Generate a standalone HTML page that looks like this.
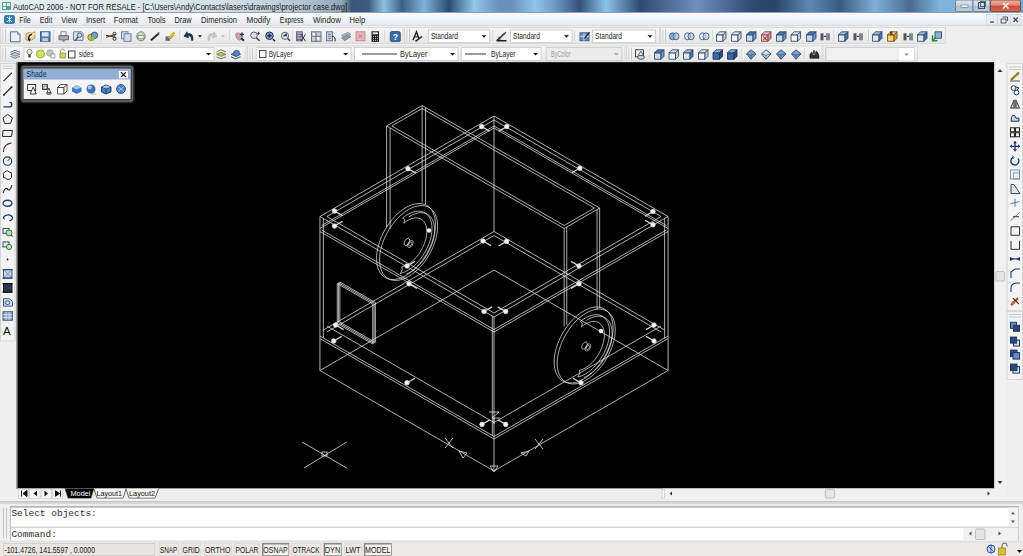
<!DOCTYPE html><html><head><meta charset="utf-8"><title>AutoCAD 2006</title><style>html,body{margin:0;padding:0;overflow:hidden;background:#f0f0f0}svg{display:block}</style></head><body>
<svg width="1023" height="556" viewBox="0 0 1023 556">
<defs>
<linearGradient id="tg" gradientUnits="userSpaceOnUse" x1="0" x2="1023" y1="0" y2="0"><stop offset="0.0000" stop-color="#e4eff2"/><stop offset="0.1466" stop-color="#dce8ee"/><stop offset="0.2248" stop-color="#d2dee6"/><stop offset="0.2933" stop-color="#b6c6d2"/><stop offset="0.3343" stop-color="#90a6b8"/><stop offset="0.3441" stop-color="#3c5474"/><stop offset="0.3597" stop-color="#3e5a7e"/><stop offset="0.3754" stop-color="#8ec0e2"/><stop offset="0.3930" stop-color="#3e5e86"/><stop offset="0.4145" stop-color="#80b2da"/><stop offset="0.4389" stop-color="#2c4c72"/><stop offset="0.4633" stop-color="#92c8ea"/><stop offset="0.4868" stop-color="#6a92bc"/><stop offset="0.5005" stop-color="#6a90c0"/><stop offset="0.5230" stop-color="#8ec6ea"/><stop offset="0.5425" stop-color="#6f98c8"/><stop offset="0.5670" stop-color="#34507a"/><stop offset="0.5924" stop-color="#8cc4ea"/><stop offset="0.6256" stop-color="#2f4a70"/><stop offset="0.6813" stop-color="#6f8fc0"/><stop offset="0.7351" stop-color="#2e4a72"/><stop offset="0.7576" stop-color="#2a4468"/><stop offset="0.7918" stop-color="#5f88b4"/><stop offset="0.8211" stop-color="#3a5a80"/><stop offset="0.8553" stop-color="#7fb0d8"/><stop offset="0.8895" stop-color="#4a6a90"/><stop offset="0.9189" stop-color="#80b4dc"/><stop offset="1.0000" stop-color="#78a8d0"/></linearGradient>
<linearGradient id="mg" x1="0" x2="0" y1="0" y2="1"><stop offset="0" stop-color="#fbfcfd"/><stop offset="1" stop-color="#e4e8ef"/></linearGradient>
<linearGradient id="tbg" x1="0" x2="0" y1="0" y2="1"><stop offset="0" stop-color="#f6f6f6"/><stop offset="1" stop-color="#e6e6e6"/></linearGradient>
<linearGradient id="closeg" x1="0" x2="0" y1="0" y2="1"><stop offset="0" stop-color="#eeb0a2"/><stop offset="0.45" stop-color="#e08a78"/><stop offset="0.52" stop-color="#c84a34"/><stop offset="1" stop-color="#d86a50"/></linearGradient>
<linearGradient id="btng" x1="0" x2="0" y1="0" y2="1"><stop offset="0" stop-color="#dde6ee"/><stop offset="0.5" stop-color="#c5d3df"/><stop offset="0.52" stop-color="#a9bccd"/><stop offset="1" stop-color="#c0d0dc"/></linearGradient>
</defs>
<rect x="0" y="0" width="1023" height="556" fill="#efefef" />
<rect x="0" y="0" width="1023" height="13" fill="url(#tg)" />
<line x1="0" y1="12.5" x2="1023" y2="12.5" stroke="#8ea2b4" stroke-width="1" />
<g fill="#2a8c7a"><rect x="2" y="2" width="9" height="8" fill="#4fa597"/><rect x="3" y="3" width="3" height="3" fill="#e8f4f0"/><rect x="7" y="3" width="3" height="3" fill="#e8f4f0"/><rect x="3" y="7" width="3" height="2" fill="#e8f4f0"/></g>
<text x="13" y="9.8" font-family='"Liberation Sans", sans-serif' font-size="8.6" fill="#1a1a1a" textLength="334" lengthAdjust="spacingAndGlyphs" >AutoCAD 2006 - NOT FOR RESALE - [C:\Users\Andy\Contacts\lasers\drawings\projector case.dwg]</text>
<rect x="955.5" y="0" width="17.5" height="11.5" fill="url(#btng)" stroke="#5f7387" stroke-width="0.8" rx="1.5"/>
<rect x="973" y="0" width="17" height="11.5" fill="url(#btng)" stroke="#5f7387" stroke-width="0.8" rx="1.5"/>
<rect x="990.5" y="0" width="30" height="11.5" fill="url(#closeg)" stroke="#6f3a30" stroke-width="0.8" rx="1.5"/>
<rect x="961" y="5" width="7" height="2.2" fill="#f4f8fb" stroke="#4d5e70" stroke-width="0.5" />
<rect x="978.5" y="2.5" width="6" height="6" fill="none" stroke="#3d4d5d" stroke-width="1" />
<rect x="980.5" y="1.5" width="5" height="5" fill="none" stroke="#3d4d5d" stroke-width="0.8" />
<path d="M1003,3 L1008.5,8.5 M1008.5,3 L1003,8.5" stroke="#fbeee8" stroke-width="1.7"/>
<rect x="0" y="13" width="1023" height="13" fill="url(#mg)" />
<line x1="0" y1="25.5" x2="1023" y2="25.5" stroke="#d8dde4" stroke-width="1" />
<rect x="4" y="15" width="11" height="9" fill="#3a7bb0" rx="2"/>
<path d="M7,17 L12,22 M12,17 L7,22 M9.5,16.5 V22.5" stroke="#dbe9f5" stroke-width="0.9"/>
<text x="19.2" y="23" font-family='"Liberation Sans", sans-serif' font-size="8.6" fill="#222" textLength="11.5" lengthAdjust="spacingAndGlyphs" >File</text>
<text x="39.7" y="23" font-family='"Liberation Sans", sans-serif' font-size="8.6" fill="#222" textLength="12.5" lengthAdjust="spacingAndGlyphs" >Edit</text>
<text x="61.2" y="23" font-family='"Liberation Sans", sans-serif' font-size="8.6" fill="#222" textLength="16.0" lengthAdjust="spacingAndGlyphs" >View</text>
<text x="86" y="23" font-family='"Liberation Sans", sans-serif' font-size="8.6" fill="#222" textLength="19" lengthAdjust="spacingAndGlyphs" >Insert</text>
<text x="113.8" y="23" font-family='"Liberation Sans", sans-serif' font-size="8.6" fill="#222" textLength="24.2" lengthAdjust="spacingAndGlyphs" >Format</text>
<text x="147.6" y="23" font-family='"Liberation Sans", sans-serif' font-size="8.6" fill="#222" textLength="18.0" lengthAdjust="spacingAndGlyphs" >Tools</text>
<text x="174.6" y="23" font-family='"Liberation Sans", sans-serif' font-size="8.6" fill="#222" textLength="17.0" lengthAdjust="spacingAndGlyphs" >Draw</text>
<text x="201" y="23" font-family='"Liberation Sans", sans-serif' font-size="8.6" fill="#222" textLength="36.1" lengthAdjust="spacingAndGlyphs" >Dimension</text>
<text x="246.5" y="23" font-family='"Liberation Sans", sans-serif' font-size="8.6" fill="#222" textLength="23.9" lengthAdjust="spacingAndGlyphs" >Modify</text>
<text x="279.8" y="23" font-family='"Liberation Sans", sans-serif' font-size="8.6" fill="#222" textLength="23.8" lengthAdjust="spacingAndGlyphs" >Express</text>
<text x="313" y="23" font-family='"Liberation Sans", sans-serif' font-size="8.6" fill="#222" textLength="27.8" lengthAdjust="spacingAndGlyphs" >Window</text>
<text x="349.6" y="23" font-family='"Liberation Sans", sans-serif' font-size="8.6" fill="#222" textLength="15.6" lengthAdjust="spacingAndGlyphs" >Help</text>
<rect x="986.6" y="14.6" width="10.600000000000023" height="10.4" fill="#e9edf2" stroke="#c4ccd6" stroke-width="0.6" />
<rect x="997.8" y="14.6" width="11.200000000000045" height="10.4" fill="#e9edf2" stroke="#c4ccd6" stroke-width="0.6" />
<rect x="1010.5" y="14.6" width="10.5" height="10.4" fill="#e9edf2" stroke="#c4ccd6" stroke-width="0.6" />
<line x1="990" y1="22" x2="994" y2="22" stroke="#444" stroke-width="1.2" />
<path d="M1001,19 h5 v4 h-5 z M1002.5,17 h5 v4" fill="none" stroke="#444" stroke-width="0.9"/>
<path d="M1013.5,17.5 L1018,22 M1018,17.5 L1013.5,22" stroke="#444" stroke-width="1.2"/>
<rect x="0.5" y="27.5" width="402.5" height="16" fill="url(#tbg)" stroke="#d9d9d9" stroke-width="1" />
<line x1="3" y1="29" x2="3" y2="42" stroke="#c8c8c8" stroke-width="1" />
<line x1="5.5" y1="29" x2="5.5" y2="42" stroke="#c8c8c8" stroke-width="1" />
<line x1="4" y1="29" x2="4" y2="42" stroke="#ffffff" stroke-width="0.6" />
<rect x="404.5" y="27.5" width="255" height="16" fill="url(#tbg)" stroke="#d9d9d9" stroke-width="1" />
<line x1="407" y1="29" x2="407" y2="42" stroke="#c8c8c8" stroke-width="1" />
<line x1="409.5" y1="29" x2="409.5" y2="42" stroke="#c8c8c8" stroke-width="1" />
<line x1="408" y1="29" x2="408" y2="42" stroke="#ffffff" stroke-width="0.6" />
<rect x="660.5" y="27.5" width="285" height="16" fill="url(#tbg)" stroke="#d9d9d9" stroke-width="1" />
<line x1="663" y1="29" x2="663" y2="42" stroke="#c8c8c8" stroke-width="1" />
<line x1="665.5" y1="29" x2="665.5" y2="42" stroke="#c8c8c8" stroke-width="1" />
<line x1="664" y1="29" x2="664" y2="42" stroke="#ffffff" stroke-width="0.6" />
<rect x="0.5" y="46.0" width="245.5" height="15.299999999999997" fill="url(#tbg)" stroke="#d9d9d9" stroke-width="1" />
<line x1="3" y1="47.5" x2="3" y2="59.8" stroke="#c8c8c8" stroke-width="1" />
<line x1="5.5" y1="47.5" x2="5.5" y2="59.8" stroke="#c8c8c8" stroke-width="1" />
<line x1="4" y1="47.5" x2="4" y2="59.8" stroke="#ffffff" stroke-width="0.6" />
<rect x="247.5" y="46.0" width="377.5" height="15.299999999999997" fill="url(#tbg)" stroke="#d9d9d9" stroke-width="1" />
<line x1="250" y1="47.5" x2="250" y2="59.8" stroke="#c8c8c8" stroke-width="1" />
<line x1="252.5" y1="47.5" x2="252.5" y2="59.8" stroke="#c8c8c8" stroke-width="1" />
<line x1="251" y1="47.5" x2="251" y2="59.8" stroke="#ffffff" stroke-width="0.6" />
<rect x="626.5" y="46.0" width="195.5" height="15.299999999999997" fill="url(#tbg)" stroke="#d9d9d9" stroke-width="1" />
<line x1="629" y1="47.5" x2="629" y2="59.8" stroke="#c8c8c8" stroke-width="1" />
<line x1="631.5" y1="47.5" x2="631.5" y2="59.8" stroke="#c8c8c8" stroke-width="1" />
<line x1="630" y1="47.5" x2="630" y2="59.8" stroke="#ffffff" stroke-width="0.6" />
<rect x="823.0" y="46.0" width="94.5" height="15.299999999999997" fill="url(#tbg)" stroke="#d9d9d9" stroke-width="1" />
<line x1="825.5" y1="47.5" x2="825.5" y2="59.8" stroke="#c8c8c8" stroke-width="1" />
<line x1="828.0" y1="47.5" x2="828.0" y2="59.8" stroke="#c8c8c8" stroke-width="1" />
<line x1="826.5" y1="47.5" x2="826.5" y2="59.8" stroke="#ffffff" stroke-width="0.6" />
<line x1="54" y1="30" x2="54" y2="41" stroke="#c9c9c9" stroke-width="1" />
<line x1="55" y1="30" x2="55" y2="41" stroke="#fbfbfb" stroke-width="1" />
<line x1="101.6" y1="30" x2="101.6" y2="41" stroke="#c9c9c9" stroke-width="1" />
<line x1="102.6" y1="30" x2="102.6" y2="41" stroke="#fbfbfb" stroke-width="1" />
<line x1="180" y1="30" x2="180" y2="41" stroke="#c9c9c9" stroke-width="1" />
<line x1="181" y1="30" x2="181" y2="41" stroke="#fbfbfb" stroke-width="1" />
<line x1="230" y1="30" x2="230" y2="41" stroke="#c9c9c9" stroke-width="1" />
<line x1="231" y1="30" x2="231" y2="41" stroke="#fbfbfb" stroke-width="1" />
<line x1="293" y1="30" x2="293" y2="41" stroke="#c9c9c9" stroke-width="1" />
<line x1="294" y1="30" x2="294" y2="41" stroke="#fbfbfb" stroke-width="1" />
<line x1="385" y1="30" x2="385" y2="41" stroke="#c9c9c9" stroke-width="1" />
<line x1="386" y1="30" x2="386" y2="41" stroke="#fbfbfb" stroke-width="1" />
<line x1="493" y1="30" x2="493" y2="41" stroke="#c9c9c9" stroke-width="1" />
<line x1="494" y1="30" x2="494" y2="41" stroke="#fbfbfb" stroke-width="1" />
<line x1="575" y1="30" x2="575" y2="41" stroke="#c9c9c9" stroke-width="1" />
<line x1="576" y1="30" x2="576" y2="41" stroke="#fbfbfb" stroke-width="1" />
<line x1="713" y1="30" x2="713" y2="41" stroke="#c9c9c9" stroke-width="1" />
<line x1="714" y1="30" x2="714" y2="41" stroke="#fbfbfb" stroke-width="1" />
<line x1="834" y1="30" x2="834" y2="41" stroke="#c9c9c9" stroke-width="1" />
<line x1="835" y1="30" x2="835" y2="41" stroke="#fbfbfb" stroke-width="1" />
<line x1="868.5" y1="30" x2="868.5" y2="41" stroke="#c9c9c9" stroke-width="1" />
<line x1="869.5" y1="30" x2="869.5" y2="41" stroke="#fbfbfb" stroke-width="1" />
<line x1="649.8" y1="48.5" x2="649.8" y2="58.8" stroke="#c9c9c9" stroke-width="1" />
<line x1="650.8" y1="48.5" x2="650.8" y2="58.8" stroke="#fbfbfb" stroke-width="1" />
<line x1="742" y1="48.5" x2="742" y2="58.8" stroke="#c9c9c9" stroke-width="1" />
<line x1="743" y1="48.5" x2="743" y2="58.8" stroke="#fbfbfb" stroke-width="1" />
<line x1="804.8" y1="48.5" x2="804.8" y2="58.8" stroke="#c9c9c9" stroke-width="1" />
<line x1="805.8" y1="48.5" x2="805.8" y2="58.8" stroke="#fbfbfb" stroke-width="1" />
<rect x="428.5" y="29.9" width="61" height="12.700000000000003" fill="#fff" stroke="#d0d0d0" stroke-width="1" />
<path d="M481.5,35.25 h5 l-2.5,2.6 z" fill="#111"/>
<text x="430.9" y="38.7" font-family='"Liberation Sans", sans-serif' font-size="8.2" fill="#222" textLength="27" lengthAdjust="spacingAndGlyphs" >Standard</text>
<rect x="510.5" y="29.9" width="61.5" height="12.700000000000003" fill="#fff" stroke="#d0d0d0" stroke-width="1" />
<path d="M564.0,35.25 h5 l-2.5,2.6 z" fill="#111"/>
<text x="513" y="38.7" font-family='"Liberation Sans", sans-serif' font-size="8.2" fill="#222" textLength="27" lengthAdjust="spacingAndGlyphs" >Standard</text>
<rect x="592.5" y="29.9" width="63" height="12.700000000000003" fill="#fff" stroke="#d0d0d0" stroke-width="1" />
<path d="M647.5,35.25 h5 l-2.5,2.6 z" fill="#111"/>
<text x="595" y="38.7" font-family='"Liberation Sans", sans-serif' font-size="8.2" fill="#222" textLength="27" lengthAdjust="spacingAndGlyphs" >Standard</text>
<rect x="24.0" y="47.5" width="190.0" height="13" fill="#fff" stroke="#d0d0d0" stroke-width="1" />
<path d="M206.0,53.0 h5 l-2.5,2.6 z" fill="#111"/>
<text x="78.8" y="56.6" font-family='"Liberation Sans", sans-serif' font-size="8.2" fill="#222" textLength="14.6" lengthAdjust="spacingAndGlyphs" >sides</text>
<rect x="256.2" y="47.5" width="94.90000000000003" height="13" fill="#fff" stroke="#d0d0d0" stroke-width="1" />
<path d="M343.1,53.0 h5 l-2.5,2.6 z" fill="#111"/>
<text x="268.7" y="56.6" font-family='"Liberation Sans", sans-serif' font-size="8.2" fill="#222" textLength="24" lengthAdjust="spacingAndGlyphs" >ByLayer</text>
<rect x="259.5" y="50.5" width="6.5" height="7" fill="#fff" stroke="#333" stroke-width="0.9" />
<rect x="354.5" y="47.5" width="103.5" height="13" fill="#fff" stroke="#d0d0d0" stroke-width="1" />
<path d="M450.0,53.0 h5 l-2.5,2.6 z" fill="#111"/>
<text x="400" y="56.6" font-family='"Liberation Sans", sans-serif' font-size="8.2" fill="#222" textLength="27.5" lengthAdjust="spacingAndGlyphs" >ByLayer</text>
<line x1="362" y1="54" x2="397" y2="54" stroke="#222" stroke-width="0.9" />
<rect x="461.3" y="47.5" width="79.80000000000001" height="13" fill="#fff" stroke="#d0d0d0" stroke-width="1" />
<path d="M533.1,53.0 h5 l-2.5,2.6 z" fill="#111"/>
<text x="491" y="56.6" font-family='"Liberation Sans", sans-serif' font-size="8.2" fill="#222" textLength="24.5" lengthAdjust="spacingAndGlyphs" >ByLayer</text>
<line x1="465" y1="54" x2="486" y2="54" stroke="#222" stroke-width="0.9" />
<rect x="546.2" y="47.5" width="75.59999999999991" height="13" fill="#ececec" stroke="#d0d0d0" stroke-width="1" />
<path d="M613.8,53.0 h5 l-2.5,2.6 z" fill="#aaa"/>
<text x="551" y="56.6" font-family='"Liberation Sans", sans-serif' font-size="8.2" fill="#9a9a9a" textLength="19.5" lengthAdjust="spacingAndGlyphs" >ByColor</text>
<rect x="825.9" y="47.5" width="88.20000000000005" height="13" fill="#f0f0f0" stroke="#d0d0d0" stroke-width="1" />
<path d="M906.1,53.0 h5 l-2.5,2.6 z" fill="#999"/>
<rect x="899" y="48" width="15" height="12.5" fill="#fff" />
<path d="M904,53.5 h5 l-2.5,2.6 z" fill="#999"/>
<rect x="0" y="62" width="17.5" height="440" fill="#efefef" />
<rect x="0.5" y="63.5" width="14.5" height="277.5" fill="#f3f3f3" stroke="#d6d6d6" stroke-width="1" />
<line x1="3" y1="66" x2="13" y2="66" stroke="#c8c8c8" stroke-width="1" />
<line x1="3" y1="68.5" x2="13" y2="68.5" stroke="#c8c8c8" stroke-width="1" />
<line x1="16.8" y1="62" x2="16.8" y2="489" stroke="#5a5a5a" stroke-width="0.8" />
<rect x="1005.5" y="62" width="17.5" height="440" fill="#efefef" />
<rect x="1007" y="63.5" width="15.5" height="247" fill="#f3f3f3" stroke="#d6d6d6" stroke-width="1" />
<line x1="1009" y1="67" x2="1021" y2="67" stroke="#c8c8c8" stroke-width="1" />
<line x1="1009" y1="69.5" x2="1021" y2="69.5" stroke="#c8c8c8" stroke-width="1" />
<rect x="1007" y="311.5" width="15.5" height="68" fill="#f3f3f3" stroke="#d6d6d6" stroke-width="1" />
<line x1="1009" y1="314.5" x2="1021" y2="314.5" stroke="#c8c8c8" stroke-width="1" />
<line x1="1009" y1="317" x2="1021" y2="317" stroke="#c8c8c8" stroke-width="1" />
<rect x="17.5" y="62.2" width="977" height="426.4" fill="#000" />
<rect x="994.5" y="62.2" width="11" height="426.4" fill="#f1f1f1" />
<line x1="994.8" y1="62.2" x2="994.8" y2="488.6" stroke="#e2e2e2" stroke-width="1" />
<path d="M997.5,72 h5 l-2.5,-3 z" fill="#333"/>
<path d="M997.5,481 h5 l-2.5,3 z" fill="#333"/>
<rect x="995.8" y="271.6" width="8.6" height="9.5" fill="#e6e6e6" stroke="#b4b4b4" stroke-width="0.8" rx="1"/>
<rect x="17.5" y="488.6" width="977" height="10.2" fill="#ededed" />
<rect x="994.5" y="488.6" width="11" height="10.2" fill="#f1f1f1" />
<rect x="18.5" y="489" width="10" height="9.3" fill="#f4f4f4" stroke="#c9c9c9" stroke-width="0.7" />
<rect x="29.5" y="489" width="10.5" height="9.3" fill="#f4f4f4" stroke="#c9c9c9" stroke-width="0.7" />
<rect x="41.0" y="489" width="10.5" height="9.3" fill="#f4f4f4" stroke="#c9c9c9" stroke-width="0.7" />
<rect x="52.5" y="489" width="10" height="9.3" fill="#f4f4f4" stroke="#c9c9c9" stroke-width="0.7" />
<path d="M21.5,490.5 v6 M27,490.5 l-4,3 l4,3 z" stroke="#111" stroke-width="1" fill="#111"/>
<path d="M37,490.8 l-3.5,2.7 l3.5,2.7 z" fill="#111"/>
<path d="M44.5,490.8 l3.5,2.7 l-3.5,2.7 z" fill="#111"/>
<path d="M55.5,490.8 l4,2.7 l-4,2.7 z M60.5,490.5 v6" stroke="#111" stroke-width="1" fill="#111"/>
<path d="M65,488.6 L68,498.2 L91,498.2 L94,488.6 z" fill="#000" stroke="#555" stroke-width="0.6"/>
<text x="70.5" y="496.3" font-family='"Liberation Sans", sans-serif' font-size="8" fill="#fff" textLength="20" lengthAdjust="spacingAndGlyphs" >Model</text>
<path d="M94,488.8 L97,498.2 L123,498.2 L126,488.8" fill="#f6f6f6" stroke="#333" stroke-width="0.7"/>
<text x="96.5" y="496.3" font-family='"Liberation Sans", sans-serif' font-size="8" fill="#111" textLength="25.5" lengthAdjust="spacingAndGlyphs" >Layout1</text>
<path d="M126,488.8 L129,498.2 L155,498.2 L158.5,488.8" fill="#f6f6f6" stroke="#333" stroke-width="0.7"/>
<text x="129" y="496.3" font-family='"Liberation Sans", sans-serif' font-size="8" fill="#111" textLength="26" lengthAdjust="spacingAndGlyphs" >Layout2</text>
<rect x="662.5" y="488.6" width="332" height="10.2" fill="#f1f1f1" />
<rect x="662" y="489.5" width="2.5" height="8.5" fill="#fafafa" stroke="#bdbdbd" stroke-width="0.6" />
<path d="M672,491.5 v4 l-2.5,-2 z" fill="#333"/>
<path d="M987.5,491.5 v4 l2.5,-2 z" fill="#333"/>
<rect x="825.3" y="489.4" width="9.4" height="8.6" fill="#e6e6e6" stroke="#b4b4b4" stroke-width="0.8" rx="1"/>
<rect x="0" y="498.8" width="1023" height="44" fill="#efefef" />
<line x1="0" y1="501.8" x2="1023" y2="501.8" stroke="#b8b8b8" stroke-width="1.2" />
<line x1="0" y1="503.6" x2="1023" y2="503.6" stroke="#cfcfcf" stroke-width="0.8" />
<line x1="3.5" y1="508" x2="3.5" y2="538" stroke="#c9c9c9" stroke-width="1" />
<line x1="6.5" y1="508" x2="6.5" y2="538" stroke="#c9c9c9" stroke-width="1" />
<rect x="10" y="506.5" width="1008.5" height="34.5" fill="#fff" />
<line x1="10" y1="506.9" x2="1018.5" y2="506.9" stroke="#9c9c9c" stroke-width="1.3" />
<line x1="10.4" y1="506.5" x2="10.4" y2="541" stroke="#a8a8a8" stroke-width="0.8" />
<line x1="10" y1="527.2" x2="1018.5" y2="527.2" stroke="#b9b9b9" stroke-width="0.9" />
<line x1="10" y1="541" x2="1018.5" y2="541" stroke="#cfcfcf" stroke-width="0.8" />
<text x="11.4" y="516.3" font-family='"Liberation Mono", monospace' font-size="9.6" fill="#2a2a2a" textLength="85.4" lengthAdjust="spacingAndGlyphs" >Select objects:</text>
<text x="11.4" y="537.2" font-family='"Liberation Mono", monospace' font-size="9.6" fill="#2a2a2a" textLength="45.5" lengthAdjust="spacingAndGlyphs" >Command:</text>
<rect x="1008.3" y="507.5" width="10" height="19.5" fill="#f4f4f4" />
<path d="M1011,514.3 h4 l-2,-2.5 z" fill="#555"/>
<path d="M1011,520.5 h4 l-2,2.5 z" fill="#555"/>
<rect x="963.4" y="527.8" width="43.4" height="12.8" fill="#f1f1f1" />
<path d="M971.5,531.5 v4 l-2.5,-2 z" fill="#444"/>
<path d="M998.5,531.5 v4 l2.5,-2 z" fill="#444"/>
<rect x="975.5" y="529" width="9.5" height="10.5" fill="#e4e4e4" stroke="#b4b4b4" stroke-width="0.8" rx="1"/>
<rect x="1006.8" y="527.8" width="11.6" height="12.8" fill="#f1f1f1" />
<line x1="1018.5" y1="506.5" x2="1018.5" y2="541" stroke="#c8c8c8" stroke-width="0.8" />
<rect x="0" y="541.5" width="1023" height="14.5" fill="#ece9e6" />
<line x1="0" y1="541.8" x2="1023" y2="541.8" stroke="#dcdcdc" stroke-width="0.8" />
<rect x="3.5" y="543.5" width="151.3" height="12" fill="#e9e6e3" stroke="#cfcbc7" stroke-width="0.8" />
<text x="4.4" y="553" font-family='"Liberation Sans", sans-serif' font-size="8.2" fill="#222" textLength="90.6" lengthAdjust="spacingAndGlyphs" >-101.4726, 141.5597 , 0.0000</text>
<rect x="159.1" y="543.5" width="19.200000000000017" height="12" fill="#eae7e4" stroke="#d6d3d0" stroke-width="0.6" />
<text x="159.9" y="553.2" font-family='"Liberation Sans", sans-serif' font-size="8.4" fill="#222" textLength="17.4" lengthAdjust="spacingAndGlyphs" >SNAP</text>
<rect x="181.8" y="543.5" width="19.0" height="12" fill="#eae7e4" stroke="#d6d3d0" stroke-width="0.6" />
<text x="182.60000000000002" y="553.2" font-family='"Liberation Sans", sans-serif' font-size="8.4" fill="#222" textLength="17.2" lengthAdjust="spacingAndGlyphs" >GRID</text>
<rect x="204.3" y="543.5" width="27.099999999999994" height="12" fill="#eae7e4" stroke="#d6d3d0" stroke-width="0.6" />
<text x="205.10000000000002" y="553.2" font-family='"Liberation Sans", sans-serif' font-size="8.4" fill="#222" textLength="25.3" lengthAdjust="spacingAndGlyphs" >ORTHO</text>
<rect x="234.8" y="543.5" width="24.69999999999999" height="12" fill="#eae7e4" stroke="#d6d3d0" stroke-width="0.6" />
<text x="235.60000000000002" y="553.2" font-family='"Liberation Sans", sans-serif' font-size="8.4" fill="#222" textLength="22.9" lengthAdjust="spacingAndGlyphs" >POLAR</text>
<rect x="262.5" y="543.5" width="26.30000000000001" height="12" fill="#f4f2f0" stroke="#8a8a8a" stroke-width="0.8" />
<line x1="263" y1="544" x2="288.3" y2="544" stroke="#6a6a6a" stroke-width="0.8" />
<line x1="263" y1="544" x2="263" y2="555.5" stroke="#6a6a6a" stroke-width="0.8" />
<text x="263.3" y="553.2" font-family='"Liberation Sans", sans-serif' font-size="8.4" fill="#222" textLength="24.5" lengthAdjust="spacingAndGlyphs" >OSNAP</text>
<rect x="291.7" y="543.5" width="28.80000000000001" height="12" fill="#eae7e4" stroke="#d6d3d0" stroke-width="0.6" />
<text x="292.5" y="553.2" font-family='"Liberation Sans", sans-serif' font-size="8.4" fill="#222" textLength="27.0" lengthAdjust="spacingAndGlyphs" >OTRACK</text>
<rect x="324.0" y="543.5" width="17.30000000000001" height="12" fill="#f4f2f0" stroke="#8a8a8a" stroke-width="0.8" />
<line x1="324.5" y1="544" x2="340.8" y2="544" stroke="#6a6a6a" stroke-width="0.8" />
<line x1="324.5" y1="544" x2="324.5" y2="555.5" stroke="#6a6a6a" stroke-width="0.8" />
<text x="324.8" y="553.2" font-family='"Liberation Sans", sans-serif' font-size="8.4" fill="#222" textLength="15.5" lengthAdjust="spacingAndGlyphs" >DYN</text>
<rect x="344.8" y="543.5" width="16.80000000000001" height="12" fill="#eae7e4" stroke="#d6d3d0" stroke-width="0.6" />
<text x="345.6" y="553.2" font-family='"Liberation Sans", sans-serif' font-size="8.4" fill="#222" textLength="15.0" lengthAdjust="spacingAndGlyphs" >LWT</text>
<rect x="364.3" y="543.5" width="27.19999999999999" height="12" fill="#f4f2f0" stroke="#8a8a8a" stroke-width="0.8" />
<line x1="364.8" y1="544" x2="391" y2="544" stroke="#6a6a6a" stroke-width="0.8" />
<line x1="364.8" y1="544" x2="364.8" y2="555.5" stroke="#6a6a6a" stroke-width="0.8" />
<text x="365.1" y="553.2" font-family='"Liberation Sans", sans-serif' font-size="8.4" fill="#222" textLength="25.4" lengthAdjust="spacingAndGlyphs" >MODEL</text>
<g><circle cx="991" cy="549" r="4" fill="#c9d5ee" stroke="#3855a6" stroke-width="1"/><path d="M988,546 l6,6 M991,544.5 v9" stroke="#3855a6" stroke-width="0.9"/></g>
<g><rect x="998.5" y="548" width="7" height="7" fill="#d8c22a" stroke="#7a6a10" stroke-width="0.6"/><path d="M1002,548 v-2.5 a2.5,2.5 0 0 1 5,0 v1" fill="none" stroke="#555" stroke-width="1"/></g>
<path d="M1017,550 h5 l-2.5,3 z" fill="#111"/>
<g clip-path="url(#dclip)">
<clipPath id="dclip"><rect x="17.5" y="62.2" width="977" height="426.4"/></clipPath>
<path d="M494.0,116.0L668.07,216.5 M668.07,216.5L494.0,317.0 M494.0,317.0L319.93,216.5 M319.93,216.5L494.0,116.0 M494.0,120.0L661.14,216.5 M661.14,216.5L494.0,313.0 M494.0,313.0L326.86,216.5 M326.86,216.5L494.0,120.0 M319.93,216.5L319.93,370.5 M494.0,317.0L494.0,471.0 M668.07,216.5L668.07,370.5 M323.39,218.5L323.39,338.0 M492.27,316.0L492.27,435.5 M664.61,218.5L664.61,338.0 M494.0,116.0L494.0,231.5 M319.93,336.0L494.0,436.5 M494.0,436.5L668.07,336.0 M319.93,338.5L494.0,439.0 M494.0,439.0L668.07,338.5 M319.93,370.5L494.0,471.0 M494.0,471.0L668.07,370.5 M319.93,370.5L494.0,270.0 M494.0,270.0L668.07,370.5 M323.39,330.0L494.0,231.5 M494.0,231.5L664.61,330.0 M326.86,332.0L494.0,235.5 M494.0,235.5L661.14,332.0 M319.93,228.5L494.0,128.0 M494.0,128.0L668.07,228.5 M319.93,231.5L494.0,332.0 M494.0,332.0L668.07,231.5 M321.66,230.0L494.0,329.5 M494.0,329.5L666.34,230.0 M321.66,225.5L494.0,126.0 M494.0,126.0L666.34,225.5 M326.86,326.0L494.0,422.5 M494.0,422.5L661.14,326.0 M422.12,105.5L599.66,208.0 M599.66,208.0L564.15,228.5 M564.15,228.5L386.61,126.0 M386.61,126.0L422.12,105.5 M422.12,108.5L594.46,208.0 M594.46,208.0L564.15,225.5 M564.15,225.5L391.81,126.0 M391.81,126.0L422.12,108.5 M386.61,126.0L386.61,227.0 M390.08,128.0L390.08,229.0 M422.12,105.5L422.12,202.5 M425.58,107.5L425.58,204.5 M564.15,228.5L564.15,326.5 M566.75,227.0L566.75,325.0 M599.66,208.0L599.66,308.0 M597.06,209.5L597.06,309.5 M337.25,283.5L372.76,304.0 M372.76,304.0L372.76,344.0 M372.76,344.0L337.25,323.5 M337.25,323.5L337.25,283.5 M338.55,282.75L374.06,303.25 M374.06,303.25L374.06,343.25 M374.06,343.25L338.55,322.75 M338.55,322.75L338.55,282.75 M339.85,282.0L375.35,302.5 M375.35,302.5L375.35,342.5 M375.35,342.5L339.85,322.0 M339.85,322.0L339.85,282.0" stroke="#e8e8e8" stroke-width="0.75" fill="none"/>
<path d="M435.44,224.50 L435.30,221.25 L434.88,218.19 L434.18,215.36 L433.20,212.78 L431.97,210.48 L430.48,208.48 L428.76,206.79 L426.82,205.44 L424.68,204.43 L422.36,203.79 L419.88,203.50 L417.27,203.58 L414.55,204.03 L411.74,204.84 L408.89,206.00 L406.00,207.50 L403.11,209.33 L400.26,211.47 L397.45,213.90 L394.73,216.59 L392.12,219.53 L389.64,222.67 L387.32,226.00 L385.18,229.48 L383.24,233.07 L381.52,236.75 L380.03,240.47 L378.80,244.19 L377.82,247.90 L377.12,251.54 L376.70,255.09 L376.56,258.50 L376.70,261.75 L377.12,264.81 L377.82,267.64 L378.80,270.22 L380.03,272.52 L381.52,274.52 L383.24,276.21 L385.18,277.56 L387.32,278.57 L389.64,279.21 L392.12,279.50 L394.73,279.42 L397.45,278.97 L400.26,278.16 L403.11,277.00 L406.00,275.50 L408.89,273.67 L411.74,271.53 L414.55,269.10 L417.27,266.41 L419.88,263.47 L422.36,260.33 L424.68,257.00 L426.82,253.52 L428.76,249.93 L430.48,246.25 L431.97,242.53 L433.20,238.81 L434.18,235.10 L434.88,231.46 L435.30,227.91 L435.44,224.50 M437.61,226.25 L437.47,223.05 L437.05,220.04 L436.36,217.25 L435.40,214.71 L434.18,212.44 L432.72,210.46 L431.02,208.80 L429.11,207.47 L427.00,206.48 L424.72,205.84 L422.27,205.56 L419.70,205.64 L417.02,206.08 L414.26,206.88 L411.44,208.02 L408.60,209.50 L405.75,211.30 L402.94,213.41 L400.18,215.80 L397.50,218.46 L394.92,221.35 L392.48,224.45 L390.19,227.73 L388.08,231.16 L386.17,234.70 L384.48,238.32 L383.01,241.98 L381.80,245.66 L380.84,249.30 L380.14,252.89 L379.73,256.39 L379.59,259.75 L379.73,262.95 L380.14,265.96 L380.84,268.75 L381.80,271.29 L383.01,273.56 L384.48,275.54 L386.17,277.20 L388.08,278.53 L390.19,279.52 L392.48,280.16 L394.92,280.44 L397.50,280.36 L400.18,279.92 L402.94,279.12 L405.75,277.98 L408.60,276.50 L411.44,274.70 L414.26,272.59 L417.02,270.20 L419.70,267.54 L422.27,264.65 L424.72,261.55 L427.00,258.27 L429.11,254.84 L431.02,251.30 L432.72,247.68 L434.18,244.02 L435.40,240.34 L436.36,236.70 L437.05,233.11 L437.47,229.61 L437.61,226.25 M400.24,273.46 L402.02,273.01 L403.83,272.39 L405.67,271.59 L407.52,270.62 L409.37,269.49 L411.21,268.20 L413.03,266.76 L414.82,265.18 L416.57,263.47 L418.27,261.64 L419.90,259.69 L421.47,257.65 L422.95,255.51 L424.35,253.30 L425.65,251.03 L426.84,248.71 L427.92,246.35 L428.89,243.97 L429.73,241.58 L430.44,239.19 L431.03,236.83 L431.47,234.50 L431.78,232.21 L431.95,229.98 L431.97,227.83 L431.86,225.77 L431.60,223.80 L431.21,221.94 L430.68,220.19 L430.01,218.58 L429.22,217.11 L428.30,215.79 L427.26,214.62 L426.10,213.62 L424.84,212.78 L423.48,212.12 L422.03,211.63 L420.49,211.32 L418.88,211.20 L417.21,211.26 L415.48,211.50 L413.70,211.92 L411.89,212.51 L410.06,213.29 L408.21,214.23 L406.36,215.34 L404.51,216.61 L402.69,218.02 M401.84,266.82 L403.24,266.47 L404.67,265.98 L406.11,265.36 L407.57,264.60 L409.02,263.71 L410.47,262.69 L411.90,261.56 L413.30,260.32 L414.68,258.98 L416.01,257.54 L417.29,256.01 L418.52,254.40 L419.69,252.72 L420.79,250.99 L421.81,249.20 L422.75,247.38 L423.60,245.52 L424.35,243.65 L425.02,241.77 L425.58,239.90 L426.03,238.04 L426.38,236.21 L426.63,234.41 L426.76,232.67 L426.78,230.98 L426.69,229.35 L426.49,227.80 L426.18,226.34 L425.76,224.97 L425.24,223.71 L424.61,222.55 L423.89,221.51 L423.07,220.60 L422.17,219.81 L421.17,219.15 L420.11,218.63 L418.96,218.24 L417.76,218.00 L416.49,217.91 L415.18,217.95 L413.82,218.14 L412.42,218.47 L411.00,218.94 L409.56,219.55 L408.11,220.29 L406.65,221.16 L405.20,222.15 L403.77,223.27 M406.37,273.91 L408.05,273.19 L409.75,272.33 L411.45,271.32 L413.14,270.19 L414.82,268.92 L416.48,267.53 L418.11,266.03 L419.70,264.42 L421.24,262.70 L422.73,260.90 L424.16,259.01 L425.52,257.05 L426.81,255.03 L428.02,252.95 L429.13,250.82 L430.16,248.67 L431.09,246.49 L431.92,244.29 L432.64,242.10 L433.25,239.92 L433.75,237.75 L434.13,235.62 L434.40,233.53 L434.54,231.48 L434.57,229.51 L434.48,227.60 L434.28,225.77 L433.95,224.03 L433.51,222.39 L432.95,220.86 L432.28,219.44 L431.51,218.14 L430.63,216.97 L429.65,215.93 L428.58,215.03 L427.42,214.27 L426.17,213.65 L424.84,213.19 L423.45,212.88 L421.99,212.72 L420.47,212.71 L418.90,212.86 L417.29,213.16 L415.65,213.61 L413.97,214.21 L412.29,214.96 L410.59,215.85 L408.89,216.88 M400.24,273.46 Q403.55,269.44 401.84,266.82 M402.69,218.02 Q405.80,218.72 403.77,223.27 M409.64,240.40 L409.54,239.63 L409.27,239.01 L408.83,238.61 L408.25,238.43 L407.58,238.49 L406.87,238.80 L406.15,239.32 L405.48,240.03 L404.91,240.87 L404.47,241.79 L404.19,242.72 L404.09,243.60 L404.19,244.37 L404.47,244.99 L404.91,245.39 L405.48,245.57 L406.15,245.51 L406.87,245.20 L407.58,244.68 L408.25,243.97 L408.83,243.13 L409.27,242.21 L409.54,241.28 L409.64,240.40 M413.10,242.40 L413.01,241.63 L412.73,241.01 L412.29,240.61 L411.72,240.43 L411.05,240.49 L410.33,240.80 L409.61,241.32 L408.94,242.03 L408.37,242.87 L407.93,243.79 L407.65,244.72 L407.56,245.60 L407.65,246.37 L407.93,246.99 L408.37,247.39 L408.94,247.57 L409.61,247.51 L410.33,247.20 L411.05,246.68 L411.72,245.97 L412.29,245.13 L412.73,244.21 L413.01,243.28 L413.10,242.40 M411.89,243.10 L411.77,242.48 L411.43,242.09 L410.93,241.99 L410.33,242.20 L409.73,242.68 L409.23,243.36 L408.89,244.14 L408.77,244.90 L408.89,245.52 L409.23,245.91 L409.73,246.01 L410.33,245.80 L410.93,245.32 L411.43,244.64 L411.77,243.86 L411.89,243.10" fill="none" stroke="#e6e6e6" stroke-width="0.75"/>
<path d="M613.04,328.00 L612.90,324.75 L612.48,321.69 L611.78,318.86 L610.80,316.28 L609.57,313.98 L608.08,311.98 L606.36,310.29 L604.42,308.94 L602.28,307.93 L599.96,307.29 L597.48,307.00 L594.87,307.08 L592.15,307.53 L589.34,308.34 L586.49,309.50 L583.60,311.00 L580.71,312.83 L577.86,314.97 L575.05,317.40 L572.33,320.09 L569.72,323.03 L567.24,326.17 L564.92,329.50 L562.78,332.98 L560.84,336.57 L559.12,340.25 L557.63,343.97 L556.40,347.69 L555.42,351.40 L554.72,355.04 L554.30,358.59 L554.16,362.00 L554.30,365.25 L554.72,368.31 L555.42,371.14 L556.40,373.72 L557.63,376.02 L559.12,378.02 L560.84,379.71 L562.78,381.06 L564.92,382.07 L567.24,382.71 L569.72,383.00 L572.33,382.92 L575.05,382.47 L577.86,381.66 L580.71,380.50 L583.60,379.00 L586.49,377.17 L589.34,375.03 L592.15,372.60 L594.87,369.91 L597.48,366.97 L599.96,363.83 L602.28,360.50 L604.42,357.02 L606.36,353.43 L608.08,349.75 L609.57,346.03 L610.80,342.31 L611.78,338.60 L612.48,334.96 L612.90,331.41 L613.04,328.00 M615.21,329.75 L615.07,326.55 L614.65,323.54 L613.96,320.75 L613.00,318.21 L611.78,315.94 L610.32,313.96 L608.62,312.30 L606.71,310.97 L604.60,309.98 L602.32,309.34 L599.87,309.06 L597.30,309.14 L594.62,309.58 L591.86,310.38 L589.04,311.52 L586.20,313.00 L583.35,314.80 L580.54,316.91 L577.78,319.30 L575.10,321.96 L572.52,324.85 L570.08,327.95 L567.79,331.23 L565.68,334.66 L563.77,338.20 L562.08,341.82 L560.61,345.48 L559.40,349.16 L558.44,352.80 L557.74,356.39 L557.33,359.89 L557.19,363.25 L557.33,366.45 L557.74,369.46 L558.44,372.25 L559.40,374.79 L560.61,377.06 L562.08,379.04 L563.77,380.70 L565.68,382.03 L567.79,383.02 L570.08,383.66 L572.52,383.94 L575.10,383.86 L577.78,383.42 L580.54,382.62 L583.35,381.48 L586.20,380.00 L589.04,378.20 L591.86,376.09 L594.62,373.70 L597.30,371.04 L599.87,368.15 L602.32,365.05 L604.60,361.77 L606.71,358.34 L608.62,354.80 L610.32,351.18 L611.78,347.52 L613.00,343.84 L613.96,340.20 L614.65,336.61 L615.07,333.11 L615.21,329.75 M577.84,376.96 L579.62,376.51 L581.43,375.89 L583.27,375.09 L585.12,374.12 L586.97,372.99 L588.81,371.70 L590.63,370.26 L592.42,368.68 L594.17,366.97 L595.87,365.14 L597.50,363.19 L599.07,361.15 L600.55,359.01 L601.95,356.80 L603.25,354.53 L604.44,352.21 L605.52,349.85 L606.49,347.47 L607.33,345.08 L608.04,342.69 L608.63,340.33 L609.07,338.00 L609.38,335.71 L609.55,333.48 L609.57,331.33 L609.46,329.27 L609.20,327.30 L608.81,325.44 L608.28,323.69 L607.61,322.08 L606.82,320.61 L605.90,319.29 L604.86,318.12 L603.70,317.12 L602.44,316.28 L601.08,315.62 L599.63,315.13 L598.09,314.82 L596.48,314.70 L594.81,314.76 L593.08,315.00 L591.30,315.42 L589.49,316.01 L587.66,316.79 L585.81,317.73 L583.96,318.84 L582.11,320.11 L580.29,321.52 M579.44,370.32 L580.84,369.97 L582.27,369.48 L583.71,368.86 L585.17,368.10 L586.62,367.21 L588.07,366.19 L589.50,365.06 L590.90,363.82 L592.28,362.48 L593.61,361.04 L594.89,359.51 L596.12,357.90 L597.29,356.22 L598.39,354.49 L599.41,352.70 L600.35,350.88 L601.20,349.02 L601.95,347.15 L602.62,345.27 L603.18,343.40 L603.63,341.54 L603.98,339.71 L604.23,337.91 L604.36,336.17 L604.38,334.48 L604.29,332.85 L604.09,331.30 L603.78,329.84 L603.36,328.47 L602.84,327.21 L602.21,326.05 L601.49,325.01 L600.67,324.10 L599.77,323.31 L598.77,322.65 L597.71,322.13 L596.56,321.74 L595.36,321.50 L594.09,321.41 L592.78,321.45 L591.42,321.64 L590.02,321.97 L588.60,322.44 L587.16,323.05 L585.71,323.79 L584.25,324.66 L582.80,325.65 L581.37,326.77 M583.97,377.41 L585.65,376.69 L587.35,375.83 L589.05,374.82 L590.74,373.69 L592.42,372.42 L594.08,371.03 L595.71,369.53 L597.30,367.92 L598.84,366.20 L600.33,364.40 L601.76,362.51 L603.12,360.55 L604.41,358.53 L605.62,356.45 L606.73,354.32 L607.76,352.17 L608.69,349.99 L609.52,347.79 L610.24,345.60 L610.85,343.42 L611.35,341.25 L611.73,339.12 L612.00,337.03 L612.14,334.98 L612.17,333.01 L612.08,331.10 L611.88,329.27 L611.55,327.53 L611.11,325.89 L610.55,324.36 L609.88,322.94 L609.11,321.64 L608.23,320.47 L607.25,319.43 L606.18,318.53 L605.02,317.77 L603.77,317.15 L602.44,316.69 L601.05,316.38 L599.59,316.22 L598.07,316.21 L596.50,316.36 L594.89,316.66 L593.25,317.11 L591.57,317.71 L589.89,318.46 L588.19,319.35 L586.49,320.38 M577.84,376.96 Q581.15,372.94 579.44,370.32 M580.29,321.52 Q583.40,322.22 581.37,326.77 M587.24,343.90 L587.14,343.13 L586.87,342.51 L586.43,342.11 L585.85,341.93 L585.18,341.99 L584.47,342.30 L583.75,342.82 L583.08,343.53 L582.51,344.37 L582.07,345.29 L581.79,346.22 L581.69,347.10 L581.79,347.87 L582.07,348.49 L582.51,348.89 L583.08,349.07 L583.75,349.01 L584.47,348.70 L585.18,348.18 L585.85,347.47 L586.43,346.63 L586.87,345.71 L587.14,344.78 L587.24,343.90 M590.70,345.90 L590.61,345.13 L590.33,344.51 L589.89,344.11 L589.32,343.93 L588.65,343.99 L587.93,344.30 L587.21,344.82 L586.54,345.53 L585.97,346.37 L585.53,347.29 L585.25,348.22 L585.16,349.10 L585.25,349.87 L585.53,350.49 L585.97,350.89 L586.54,351.07 L587.21,351.01 L587.93,350.70 L588.65,350.18 L589.32,349.47 L589.89,348.63 L590.33,347.71 L590.61,346.78 L590.70,345.90 M589.49,346.60 L589.37,345.98 L589.03,345.59 L588.53,345.49 L587.93,345.70 L587.33,346.18 L586.83,346.86 L586.49,347.64 L586.37,348.40 L586.49,349.02 L586.83,349.41 L587.33,349.51 L587.93,349.30 L588.53,348.82 L589.03,348.14 L589.37,347.36 L589.49,346.60" fill="none" stroke="#e6e6e6" stroke-width="0.75"/>
<g fill="#f4f4f4"><circle cx="429" cy="230.5" r="2.2"/><circle cx="601" cy="331" r="2.2"/></g>
<g fill="#f4f4f4" stroke="#d8d8d8" stroke-width="0.7"><path d="M481.7,126.6 l8,4.6" stroke-width="1.3"/><circle cx="481.7" cy="126.6" r="2.3"/><path d="M506.8,126.6 l-8,4.6" stroke-width="1.3"/><circle cx="506.8" cy="126.6" r="2.3"/><path d="M408,168.7 l8,4.6" stroke-width="1.3"/><circle cx="408" cy="168.7" r="2.3"/><path d="M579.8,168.2 l-8,4.6" stroke-width="1.3"/><circle cx="579.8" cy="168.2" r="2.3"/><path d="M334.5,211 l8,4.6" stroke-width="1.3"/><circle cx="334.5" cy="211" r="2.3"/><path d="M334.5,226 l8,-4.6" stroke-width="1.3"/><circle cx="334.5" cy="226" r="2.3"/><path d="M653,211.5 l-8,4.6" stroke-width="1.3"/><circle cx="653" cy="211.5" r="2.3"/><path d="M653,224.8 l-8,-4.6" stroke-width="1.3"/><circle cx="653" cy="224.8" r="2.3"/><path d="M484,311.5 l8,-4.6" stroke-width="1.3"/><circle cx="484" cy="311.5" r="2.3"/><path d="M505.7,311.5 l-8,-4.6" stroke-width="1.3"/><circle cx="505.7" cy="311.5" r="2.3"/><path d="M483,241 l8,4.6" stroke-width="1.3"/><circle cx="483" cy="241" r="2.3"/><path d="M506.6,241.4 l-8,4.6" stroke-width="1.3"/><circle cx="506.6" cy="241.4" r="2.3"/><path d="M407,266 l8,-4.6" stroke-width="1.3"/><circle cx="407" cy="266" r="2.3"/><path d="M409,283.8 l8,4.6" stroke-width="1.3"/><circle cx="409" cy="283.8" r="2.3"/><path d="M579,266 l-8,-4.6" stroke-width="1.3"/><circle cx="579" cy="266" r="2.3"/><path d="M579,283.8 l-8,4.6" stroke-width="1.3"/><circle cx="579" cy="283.8" r="2.3"/><path d="M335.6,325 l8,4.6" stroke-width="1.3"/><circle cx="335.6" cy="325" r="2.3"/><path d="M333.7,341 l8,-4.6" stroke-width="1.3"/><circle cx="333.7" cy="341" r="2.3"/><path d="M654,325 l-8,4.6" stroke-width="1.3"/><circle cx="654" cy="325" r="2.3"/><path d="M654,341 l-8,-4.6" stroke-width="1.3"/><circle cx="654" cy="341" r="2.3"/><path d="M407,382.8 l8,-4.6" stroke-width="1.3"/><circle cx="407" cy="382.8" r="2.3"/><path d="M581,382.8 l-8,-4.6" stroke-width="1.3"/><circle cx="581" cy="382.8" r="2.3"/><path d="M482,424.4 l8,-4.6" stroke-width="1.3"/><circle cx="482" cy="424.4" r="2.3"/><path d="M505.7,424.4 l-8,-4.6" stroke-width="1.3"/><circle cx="505.7" cy="424.4" r="2.3"/></g>
<g stroke="#e6e6e6" stroke-width="0.8" fill="none"><path d="M302,442 L346.7,468 M304,468 L346.7,442"/><rect x="322" y="452" width="5" height="4"/><path d="M445,438 l8,10 M453,438 l-8,10 M535,439 l8,10 M543,439 l-8,10"/><path d="M459,451 l8,2 l-4,5 z M521,453 l8,-2 l-3,5 z"/><path d="M489,412 h10 l-7,6 h8 M494,418 v6"/><path d="M490,466 l4,6 l4,-6 z"/></g>
</g>
<rect x="20.5" y="65" width="113.6" height="37.8" fill="#3c3c3c" stroke="#2a2a2a" stroke-width="1" rx="3.5"/>
<rect x="22.2" y="66.7" width="110.2" height="34.4" fill="none" stroke="#6a6a6a" stroke-width="1.2" rx="2.5"/>
<rect x="23.6" y="68.8" width="106.9" height="30.2" fill="#f4f4f4" />
<rect x="23.6" y="68.8" width="106.9" height="10.7" fill="#93b0d4" />
<text x="26.6" y="77.4" font-family='"Liberation Sans", sans-serif' font-size="8.4" fill="#1a2f4e" textLength="19.9" lengthAdjust="spacingAndGlyphs" >Shade</text>
<rect x="118.9" y="71" width="9.1" height="7.3" fill="#fbfbfb" />
<path d="M121,72.2 L126,77 M126,72.2 L121,77" stroke="#111" stroke-width="1.1"/>
<g transform="translate(10,31.3)"><path d="M0.5,0.5 h7 l2.5,2.5 v7.5 h-9.5 z" fill="#e8f0f8" stroke="#5c7494" stroke-width="1"/><path d="M7.5,0.5 v2.5 h2.5" fill="#b8c8dc" stroke="#5c7494" stroke-width="0.7"/></g>
<g transform="translate(25.4,31.3)"><path d="M0.5,2.5 L4,1 L6,2 L9.5,0.5 V7 L4,10 L0.5,8.5 z" fill="#e6d49a" stroke="#a89050" stroke-width="0.8"/><path d="M2,8 L9.5,2" stroke="#f4e8c0" stroke-width="1.5"/><path d="M6.5,3 Q2.5,4 3.5,8.5" fill="none" stroke="#111" stroke-width="1.3"/><path d="M2,7.5 L4,10 L5.5,7.5 z" fill="#111"/></g>
<g transform="translate(40,31.3)"><rect x="0.5" y="0.5" width="9.5" height="9.5" fill="#5b82b8" stroke="#3b5c8c"/><rect x="2" y="1" width="6.5" height="4" fill="#dbe6f2"/><rect x="2.5" y="7" width="5.5" height="3" fill="#c4d0de"/></g>
<g transform="translate(58.5,31.3)"><rect x="2.5" y="0.5" width="5" height="4" fill="#fff" stroke="#6a6e78" stroke-width="0.8"/><path d="M0.5,4.5 h9.5 v4 h-9.5 z" fill="#a9aeb8" stroke="#555a64" stroke-width="0.9"/><circle cx="5" cy="9" r="1.6" fill="#8a8e98"/></g>
<g transform="translate(73,31.3)"><path d="M0.5,0.5 h8 l1.5,1.5 v7 h-9.5 z" fill="#d8e4f0" stroke="#5a7088" stroke-width="0.9"/><path d="M2,9.5 L5,5.5" stroke="#3d4e62" stroke-width="1.4"/><circle cx="6.5" cy="4" r="2.3" fill="#b8cde2" stroke="#3d4e62" stroke-width="0.8"/></g>
<g transform="translate(87.5,31.3)"><circle cx="3.5" cy="6" r="3.2" fill="#d8c436" stroke="#7a6a20" stroke-width="0.8"/><circle cx="7" cy="4" r="3.2" fill="#6f9fd0" stroke="#2a4a7a" stroke-width="0.8"/><circle cx="5" cy="7.5" r="2.2" fill="#9ab84a"/></g>
<g transform="translate(106,31.3)"><path d="M0,4 L10,6 M0,6 L10,3" stroke="#333" stroke-width="1"/><circle cx="8.5" cy="2.5" r="1.5" fill="none" stroke="#333" stroke-width="1"/><circle cx="8.5" cy="7.5" r="1.5" fill="none" stroke="#333" stroke-width="1"/></g>
<g transform="translate(121,31.3)"><rect x="0.5" y="0.5" width="6.5" height="7" fill="#dfe8f2" stroke="#5c7494" stroke-width="0.9"/><rect x="3" y="2.5" width="7" height="7.5" fill="#cfdcea" stroke="#5c7494" stroke-width="0.9"/></g>
<g transform="translate(136,31.3)"><ellipse cx="5" cy="5" rx="4.2" ry="4.5" fill="#d6dccb" stroke="#7a8a6a" stroke-width="1"/><rect x="2" y="4" width="6" height="3.5" fill="#eef0e6" stroke="#6a7a5a" stroke-width="0.7"/></g>
<g transform="translate(150,31.3)"><path d="M1,9 L9,2" stroke="#2a2a2a" stroke-width="2"/><path d="M7,2.5 L9.5,1" stroke="#888" stroke-width="1.2"/></g>
<g transform="translate(165,31.3)"><rect x="0.5" y="5" width="4.5" height="4.5" fill="#6a6a6a"/><path d="M4,7 L9.5,1" stroke="#d8b432" stroke-width="2.6"/><path d="M5,8 L9,4" stroke="#8a6a20" stroke-width="0.8"/></g>
<g transform="translate(183.5,31.3)"><path d="M9.5,9 Q10,1 4,2.5 L3.5,0.5 L0.5,5 L5,6.5 L4.5,4.5 Q8,4 8,9 z" fill="#1a3058" stroke="#10203c" stroke-width="0.6"/></g>
<g transform="translate(198,31.3)"><path d="M0,4 h4 l-2,2.2 z" fill="#111"/></g>
<g transform="translate(207.5,31.3)"><path d="M0.5,9 Q0,1 6,2.5 L6.5,0.5 L9.5,5 L5,6.5 L5.5,4.5 Q2,4 2,9 z" fill="#c9c9c9" stroke="#b0b0b0" stroke-width="0.6"/></g>
<g transform="translate(221,31.3)"><path d="M0,4 h4 l-2,2.2 z" fill="#bbb"/></g>
<g transform="translate(235,31.3)"><path d="M0.5,3 Q2,0.5 5,2 L8,5 Q7,9 4,9 Q1,8 0.5,3 z" fill="#c8a0a8" stroke="#9a7078" stroke-width="0.6"/><path d="M7,1 v4 M5,3 h4" stroke="#1a3058" stroke-width="1.2"/><path d="M6,7 L9,9.5" stroke="#1a3058" stroke-width="2"/></g>
<g transform="translate(250,31.3)"><circle cx="4" cy="4" r="3.3" fill="#d8dde6" stroke="#5a6472" stroke-width="1"/><path d="M6.5,6.5 L9.5,9.5" stroke="#444" stroke-width="1.6"/><path d="M8.5,0.5 v3 M7,2 h3" stroke="#333" stroke-width="0.9"/></g>
<g transform="translate(265,31.3)"><circle cx="4.5" cy="4.5" r="3.8" fill="#8aa0bc" stroke="#1a3058" stroke-width="1"/><path d="M2.5,4.5 h4 M4.5,2.5 v4" stroke="#1a3058" stroke-width="1.4"/><path d="M8,8 L10,10" stroke="#111" stroke-width="1.6"/></g>
<g transform="translate(280.5,31.3)"><circle cx="4.5" cy="4.5" r="3.6" fill="#dfe4ea" stroke="#5a6472" stroke-width="1"/><path d="M2,5 L6,2 L6.5,5 z" fill="#1a3058"/><path d="M7,7 L9.5,9.5" stroke="#444" stroke-width="1.6"/></g>
<g transform="translate(296,31.3)"><rect x="0.5" y="0.5" width="6" height="9" fill="#b8a8c8" stroke="#5a4a70" stroke-width="0.8"/><path d="M1,3 h5 M1,5.5 h5 M1,8 h5" stroke="#5a4a70" stroke-width="0.8"/><path d="M5,3 L9.5,10 M9.5,3 L5,10" stroke="#333" stroke-width="1"/></g>
<g transform="translate(311,31.3)"><rect x="0.5" y="0.5" width="9.5" height="9.5" fill="#c8d0d8" stroke="#6a7480" stroke-width="1"/><path d="M0.5,5 h9.5 M5,0.5 v9.5" stroke="#6a7480" stroke-width="1"/><rect x="2" y="2" width="2" height="2" fill="#fff"/><rect x="6" y="6" width="2" height="2" fill="#fff"/></g>
<g transform="translate(326,31.3)"><rect x="0.5" y="0.5" width="6" height="9" fill="#c8d4e2" stroke="#5a6e86" stroke-width="0.9"/><path d="M2,3 h3 M2,5 h3 M2,7 h3" stroke="#5a6e86" stroke-width="0.8"/><path d="M6,5 Q10,5 9,10" fill="none" stroke="#222" stroke-width="1"/></g>
<g transform="translate(341,31.3)"><path d="M0.5,4 L7,1 L10,3 L3.5,7 z" fill="#a8b4bc" stroke="#7a868e" stroke-width="0.6"/><path d="M0.5,6.5 L7,3.5 L10,5.5 L3.5,9.5 z" fill="#8c9aa4" stroke="#6a767e" stroke-width="0.6"/></g>
<g transform="translate(355.5,31.3)"><rect x="0.5" y="0.5" width="9" height="9" fill="#e8b8c0" stroke="#b87888" stroke-width="0.8"/><path d="M2,2 L5,4 L8,2 L6,5 L8,8 L5,6 L2,8 L4,5 z" fill="#d88898"/></g>
<g transform="translate(370,31.3)"><rect x="1.5" y="0" width="7.5" height="10.5" fill="#1a1a1a"/><rect x="2.5" y="1" width="5.5" height="2" fill="#e8e8e8"/><path d="M3,5 h1 M5,5 h1 M7,5 h1 M3,7 h1 M5,7 h1 M7,7 h1 M3,9 h1 M5,9 h1 M7,9 h1" stroke="#ddd" stroke-width="0.9"/></g>
<g transform="translate(390,31.3)"><rect x="0.3" y="0.3" width="10" height="10" rx="1.5" fill="#3a6ea8" stroke="#1c4478" stroke-width="0.8"/><text x="2.8" y="8.6" font-family='"Liberation Sans",sans-serif' font-weight="bold" font-size="8.5" fill="#fff">?</text></g>
<g transform="translate(412.5,31.3)"><path d="M0.5,9 L4,0.5 L6.5,8" fill="none" stroke="#222" stroke-width="1.4"/><path d="M2,5.5 h4" stroke="#222" stroke-width="1"/><path d="M3,10 L9.5,5" stroke="#333" stroke-width="1.6"/></g>
<g transform="translate(496,31.3)"><path d="M0.5,9.5 h10 M0.5,9.5 L9,2" stroke="#222" stroke-width="1.5"/><path d="M4,9 Q4,6 2.5,6" fill="none" stroke="#222" stroke-width="1"/><path d="M6,4 L10,1" stroke="#555" stroke-width="1.4"/></g>
<g transform="translate(579.5,31.3)"><rect x="0.5" y="1.5" width="9" height="8" fill="#6a8cc0" stroke="#2a4a7a" stroke-width="0.8"/><path d="M0.5,5 h9 M4.5,1.5 v8" stroke="#dfe8f4" stroke-width="0.8"/><path d="M5,7 L10,1" stroke="#222" stroke-width="1.2"/></g>
<g transform="translate(669,31.3)"><ellipse cx="3.5" cy="5" rx="3" ry="3.5" fill="#8fb0d0" stroke="#3a5a80" stroke-width="0.9"/><ellipse cx="7" cy="5" rx="3" ry="3.5" fill="#a8c4e0" fill-opacity="0.7" stroke="#3a5a80" stroke-width="0.9"/></g>
<g transform="translate(684,31.3)"><ellipse cx="3.5" cy="5" rx="3" ry="3.5" fill="#e0e8f0" stroke="#3a5a80" stroke-width="0.9"/><ellipse cx="7" cy="5" rx="3" ry="3.5" fill="#a8c4e0" fill-opacity="0.6" stroke="#3a5a80" stroke-width="0.9"/></g>
<g transform="translate(699,31.3)"><ellipse cx="3.5" cy="5" rx="3" ry="3.5" fill="#f0f4f8" stroke="#3a5a80" stroke-width="0.9"/><ellipse cx="7" cy="5" rx="3" ry="3.5" fill="#c8d8e8" fill-opacity="0.6" stroke="#3a5a80" stroke-width="0.9"/></g>
<g transform="translate(716,31.3)"><path d="M0.5,3.5 h6.5 v6.5 h-6.5 z" fill="#f4f6f8" stroke="#2a3e58" stroke-width="0.8"/><path d="M0.5,3.5 l3,-3 h6.5 l-3,3 z" fill="#dfe6ee" stroke="#2a3e58" stroke-width="0.8"/><path d="M7,3.5 l3,-3 v6.5 l-3,3 z" fill="#c8d2dc" stroke="#2a3e58" stroke-width="0.8"/></g>
<g transform="translate(731,31.3)"><path d="M0.5,3.5 h6.5 v6.5 h-6.5 z" fill="#f4f6f8" stroke="#2a3e58" stroke-width="0.8"/><path d="M0.5,3.5 l3,-3 h6.5 l-3,3 z" fill="#dfe6ee" stroke="#2a3e58" stroke-width="0.8"/><path d="M7,3.5 l3,-3 v6.5 l-3,3 z" fill="#c8d2dc" stroke="#2a3e58" stroke-width="0.8"/></g>
<g transform="translate(746,31.3)"><path d="M0.5,3.5 h6.5 v6.5 h-6.5 z" fill="#c8daf0" stroke="#2a3e58" stroke-width="0.8"/><path d="M0.5,3.5 l3,-3 h6.5 l-3,3 z" fill="#4a78b0" stroke="#2a3e58" stroke-width="0.8"/><path d="M7,3.5 l3,-3 v6.5 l-3,3 z" fill="#6a98c8" stroke="#2a3e58" stroke-width="0.8"/></g>
<g transform="translate(761,31.3)"><path d="M0.5,3.5 h6.5 v6.5 h-6.5 z" fill="#f0dede" stroke="#7a3030" stroke-width="0.8"/><path d="M0.5,3.5 l3,-3 h6.5 l-3,3 z" fill="#e8c8c8" stroke="#7a3030" stroke-width="0.8"/><path d="M7,3.5 l3,-3 v6.5 l-3,3 z" fill="#c89898" stroke="#7a3030" stroke-width="0.8"/><path d="M2,5 L6,9 M6,5 L2,9" stroke="#c03030" stroke-width="1.1"/></g>
<g transform="translate(776,31.3)"><path d="M0.5,3.5 h6.5 v6.5 h-6.5 z" fill="#c8daf0" stroke="#2a3e58" stroke-width="0.8"/><path d="M0.5,3.5 l3,-3 h6.5 l-3,3 z" fill="#4a78b0" stroke="#2a3e58" stroke-width="0.8"/><path d="M7,3.5 l3,-3 v6.5 l-3,3 z" fill="#6a98c8" stroke="#2a3e58" stroke-width="0.8"/></g>
<g transform="translate(790.5,31.3)"><path d="M0.5,3.5 h6.5 v6.5 h-6.5 z" fill="#f4f6f8" stroke="#2a3e58" stroke-width="0.8"/><path d="M0.5,3.5 l3,-3 h6.5 l-3,3 z" fill="#dfe6ee" stroke="#2a3e58" stroke-width="0.8"/><path d="M7,3.5 l3,-3 v6.5 l-3,3 z" fill="#c8d2dc" stroke="#2a3e58" stroke-width="0.8"/></g>
<g transform="translate(806,31.3)"><path d="M0.5,3.5 h6.5 v6.5 h-6.5 z" fill="#c8daf0" stroke="#2a3e58" stroke-width="0.8"/><path d="M0.5,3.5 l3,-3 h6.5 l-3,3 z" fill="#4a78b0" stroke="#2a3e58" stroke-width="0.8"/><path d="M7,3.5 l3,-3 v6.5 l-3,3 z" fill="#6a98c8" stroke="#2a3e58" stroke-width="0.8"/></g>
<g transform="translate(820,31.3)"><rect x="0.5" y="2" width="3" height="7" fill="#555"/><rect x="6" y="2" width="4" height="7" fill="#7a8a9a"/><path d="M4,5 h2" stroke="#222"/></g>
<g transform="translate(838,31.3)"><path d="M0.5,3.5 h6.5 v6.5 h-6.5 z" fill="#dfe8f2" stroke="#2a3e58" stroke-width="0.8"/><path d="M0.5,3.5 l3,-3 h6.5 l-3,3 z" fill="#9fbde0" stroke="#2a3e58" stroke-width="0.8"/><path d="M7,3.5 l3,-3 v6.5 l-3,3 z" fill="#4a78b0" stroke="#2a3e58" stroke-width="0.8"/></g>
<g transform="translate(853,31.3)"><rect x="0.5" y="2" width="3" height="7" fill="#555"/><rect x="6" y="2" width="4" height="7" fill="#7a8a9a"/><path d="M4,5 h2" stroke="#222"/></g>
<g transform="translate(872,31.3)"><path d="M0.5,3.5 h6.5 v6.5 h-6.5 z" fill="#dfe8f2" stroke="#2a3e58" stroke-width="0.8"/><path d="M0.5,3.5 l3,-3 h6.5 l-3,3 z" fill="#9fbde0" stroke="#2a3e58" stroke-width="0.8"/><path d="M7,3.5 l3,-3 v6.5 l-3,3 z" fill="#4a78b0" stroke="#2a3e58" stroke-width="0.8"/></g>
<g transform="translate(887,31.3)"><path d="M0.5,3.5 h6.5 v6.5 h-6.5 z" fill="#f0d070" stroke="#6a4a10" stroke-width="0.8"/><path d="M0.5,3.5 l3,-3 h6.5 l-3,3 z" fill="#f4e0a0" stroke="#6a4a10" stroke-width="0.8"/><path d="M7,3.5 l3,-3 v6.5 l-3,3 z" fill="#c89a30" stroke="#6a4a10" stroke-width="0.8"/><rect x="3" y="0" width="2.5" height="4" fill="#6a4a10"/></g>
<g transform="translate(903,31.3)"><rect x="0.5" y="2" width="3" height="7" fill="#555"/><rect x="6" y="2" width="4" height="7" fill="#7a8a9a"/><path d="M4,5 h2" stroke="#222"/></g>
<g transform="translate(917,31.3)"><path d="M0.5,3.5 h6.5 v6.5 h-6.5 z" fill="#dfe8f2" stroke="#2a3e58" stroke-width="0.8"/><path d="M0.5,3.5 l3,-3 h6.5 l-3,3 z" fill="#9fbde0" stroke="#2a3e58" stroke-width="0.8"/><path d="M7,3.5 l3,-3 v6.5 l-3,3 z" fill="#4a78b0" stroke="#2a3e58" stroke-width="0.8"/></g>
<g transform="translate(932,31.3)"><path d="M3,0.5 h6.5 v6.5 h-6.5 z" fill="#8fb0d0" stroke="#2e4e78" stroke-width="0.9"/><path d="M0.5,4 v5.5 h5 M0.5,9.5 l3,-3" fill="none" stroke="#2a8a2a" stroke-width="1.4"/></g>
<g transform="translate(10,49.3)"><path d="M0.5,5 L5,3 L10,5 L5,7 z" fill="#b8c4d0" stroke="#5a6a7a" stroke-width="0.7"/><path d="M0.5,7 L5,9 L10,7" fill="none" stroke="#5a6a7a" stroke-width="0.9"/><path d="M0.5,3 L5,1 L10,3" fill="none" stroke="#5a6a7a" stroke-width="0.9"/></g>
<g transform="translate(216,49.3)"><path d="M0.5,5 L5,3 L10,5 L5,7 z" fill="#b8c860" stroke="#5a6a2a" stroke-width="0.7"/><path d="M0.5,7.5 L5,9.5 L10,7.5 M0.5,2.5 L5,0.5 L10,2.5" fill="none" stroke="#5a7a3a" stroke-width="0.9"/></g>
<g transform="translate(230.5,49.3)"><path d="M0.5,5 L5,3 L10,5 L5,7 z" fill="#7aa0d0" stroke="#2a4a7a" stroke-width="0.8"/><circle cx="6" cy="4" r="3" fill="#5a80b8" stroke="#2a4a7a" stroke-width="0.7"/><path d="M0.5,7.5 L5,9.5 L10,7.5" fill="none" stroke="#2a4a7a"/></g>
<g transform="translate(635,49.3)"><rect x="0.5" y="0.5" width="8" height="7" fill="#f0f4f8" stroke="#333" stroke-width="0.9"/><ellipse cx="6" cy="8" rx="3.5" ry="2" fill="#c8d4e0" stroke="#333" stroke-width="0.8"/><path d="M3,6 L6,2 L9,7" fill="none" stroke="#333" stroke-width="0.8"/></g>
<g transform="translate(654,49.3)"><path d="M0.5,3.5 h6.5 v6.5 h-6.5 z" fill="#c8daf0" stroke="#2a3e58" stroke-width="0.8"/><path d="M0.5,3.5 l3,-3 h6.5 l-3,3 z" fill="#4a78b0" stroke="#2a3e58" stroke-width="0.8"/><path d="M7,3.5 l3,-3 v6.5 l-3,3 z" fill="#6a98c8" stroke="#2a3e58" stroke-width="0.8"/></g>
<g transform="translate(668.5,49.3)"><path d="M0.5,3.5 h6.5 v6.5 h-6.5 z" fill="#f4f6f8" stroke="#2a3e58" stroke-width="0.8"/><path d="M0.5,3.5 l3,-3 h6.5 l-3,3 z" fill="#dfe6ee" stroke="#2a3e58" stroke-width="0.8"/><path d="M7,3.5 l3,-3 v6.5 l-3,3 z" fill="#c8d2dc" stroke="#2a3e58" stroke-width="0.8"/></g>
<g transform="translate(683,49.3)"><path d="M0.5,3.5 h6.5 v6.5 h-6.5 z" fill="#dfe8f2" stroke="#2a3e58" stroke-width="0.8"/><path d="M0.5,3.5 l3,-3 h6.5 l-3,3 z" fill="#9fbde0" stroke="#2a3e58" stroke-width="0.8"/><path d="M7,3.5 l3,-3 v6.5 l-3,3 z" fill="#4a78b0" stroke="#2a3e58" stroke-width="0.8"/></g>
<g transform="translate(698,49.3)"><path d="M0.5,3.5 h6.5 v6.5 h-6.5 z" fill="#f4f6f8" stroke="#2a3e58" stroke-width="0.8"/><path d="M0.5,3.5 l3,-3 h6.5 l-3,3 z" fill="#dfe6ee" stroke="#2a3e58" stroke-width="0.8"/><path d="M7,3.5 l3,-3 v6.5 l-3,3 z" fill="#c8d2dc" stroke="#2a3e58" stroke-width="0.8"/></g>
<g transform="translate(712.5,49.3)"><path d="M0.5,3.5 h6.5 v6.5 h-6.5 z" fill="#3a6aa8" stroke="#1c3050" stroke-width="0.8"/><path d="M0.5,3.5 l3,-3 h6.5 l-3,3 z" fill="#8ab0dc" stroke="#1c3050" stroke-width="0.8"/><path d="M7,3.5 l3,-3 v6.5 l-3,3 z" fill="#2a4a7a" stroke="#1c3050" stroke-width="0.8"/></g>
<g transform="translate(727,49.3)"><path d="M0.5,3.5 h6.5 v6.5 h-6.5 z" fill="#3a6aa8" stroke="#1c3050" stroke-width="0.8"/><path d="M0.5,3.5 l3,-3 h6.5 l-3,3 z" fill="#8ab0dc" stroke="#1c3050" stroke-width="0.8"/><path d="M7,3.5 l3,-3 v6.5 l-3,3 z" fill="#2a4a7a" stroke="#1c3050" stroke-width="0.8"/></g>
<g transform="translate(746,49.3)"><path d="M5,0.5 L10,4.5 L5,10 L0.5,4.5 z" fill="#7aa0c8" stroke="#2e4e78" stroke-width="0.9"/><path d="M0.5,4.5 L5,6 L10,4.5 M5,6 V10" stroke="#2e4e78" stroke-width="0.7" fill="none"/></g>
<g transform="translate(761,49.3)"><path d="M5,0.5 L10,4.5 L5,10 L0.5,4.5 z" fill="#d0e0f0" stroke="#2e4e78" stroke-width="0.9"/><path d="M0.5,4.5 L5,6 L10,4.5 M5,6 V10" stroke="#2e4e78" stroke-width="0.7" fill="none"/></g>
<g transform="translate(776,49.3)"><path d="M5,0.5 L10,4.5 L5,10 L0.5,4.5 z" fill="#7aa0c8" stroke="#2e4e78" stroke-width="0.9"/><path d="M0.5,4.5 L5,6 L10,4.5 M5,6 V10" stroke="#2e4e78" stroke-width="0.7" fill="none"/></g>
<g transform="translate(791,49.3)"><path d="M5,0.5 L10,4.5 L5,10 L0.5,4.5 z" fill="#7aa0c8" stroke="#2e4e78" stroke-width="0.9"/><path d="M0.5,4.5 L5,6 L10,4.5 M5,6 V10" stroke="#2e4e78" stroke-width="0.7" fill="none"/></g>
<g transform="translate(809,49.3)"><path d="M1,9 Q0,4 3,3 L4,6 L6,6 L7,2 Q10,3 10,9 z" fill="#333" stroke="#111" stroke-width="0.6"/><rect x="4" y="1" width="2" height="4" fill="#555"/></g>
<g><circle cx="29.5" cy="52" r="2.6" fill="#f8f4d8" stroke="#555" stroke-width="0.7"/><rect x="28.3" y="54.5" width="2.4" height="3" fill="#444"/><circle cx="40.5" cy="54" r="4" fill="#d4e060" stroke="#8a9a20" stroke-width="0.8"/><circle cx="50" cy="53" r="3.3" fill="#c0c8c0" stroke="#8a928a" stroke-width="0.7"/><rect x="51" y="54" width="4" height="4" fill="#fff" stroke="#777" stroke-width="0.6"/><rect x="60" y="53" width="5.5" height="5" fill="#d8d850" stroke="#6a6a2a" stroke-width="0.6"/><path d="M60.5,53 v-2 a2,2 0 0 1 4,0" fill="none" stroke="#8a8a40" stroke-width="0.8"/><rect x="68.5" y="51" width="6.5" height="7" fill="#fff" stroke="#222" stroke-width="0.9"/></g>
<g transform="translate(2.5,71.7)"><path d="M1,9.5 L9.5,1" stroke="#222" stroke-width="1.1"/></g>
<g transform="translate(2.5,85.76)"><path d="M1,9.5 L9.5,1" stroke="#222" stroke-width="1.1"/><circle cx="1.5" cy="9" r="1" fill="#222"/><circle cx="9" cy="1.5" r="1" fill="#222"/></g>
<g transform="translate(2.5,99.82000000000001)"><path d="M1,7 h7 Q10,6 9,3 L7,2.5" fill="none" stroke="#1c3a6a" stroke-width="1.2"/></g>
<g transform="translate(2.5,113.88)"><path d="M5,0.5 L10,4 L8,9.5 H2 L0.5,4 z" fill="none" stroke="#222" stroke-width="1"/></g>
<g transform="translate(2.5,127.94)"><path d="M0.5,2.5 h9.5 l-1,6 h-9 z" fill="none" stroke="#222" stroke-width="1"/></g>
<g transform="translate(2.5,142.0)"><path d="M1,10 Q1,2 9,1" fill="none" stroke="#222" stroke-width="1.1"/></g>
<g transform="translate(2.5,156.06)"><circle cx="5" cy="5" r="4.2" fill="none" stroke="#1c3a6a" stroke-width="1.1"/><path d="M5,5 L8,2" stroke="#1c3a6a"/></g>
<g transform="translate(2.5,170.12)"><path d="M2,2 Q5,-1 7,2 Q10,2 9,5 Q10,8 7,9 Q4,10 3,8 Q0,8 1,5 Q0,3 2,2 z" fill="none" stroke="#222" stroke-width="1"/></g>
<g transform="translate(2.5,184.18)"><path d="M0.5,9 Q3,2 5,5 Q7,8 9.5,1" fill="none" stroke="#222" stroke-width="1.1"/></g>
<g transform="translate(2.5,198.24)"><ellipse cx="5" cy="5" rx="4.5" ry="3" fill="none" stroke="#1c3a6a" stroke-width="1.3"/></g>
<g transform="translate(2.5,212.3)"><path d="M1,6 A4.5,3 0 1 1 7,8.5" fill="none" stroke="#1c3a6a" stroke-width="1.3"/><path d="M1,5 l1,2" stroke="#222"/></g>
<g transform="translate(2.5,226.36)"><rect x="0.5" y="2" width="6" height="5" fill="#e8eef4" stroke="#1c3a6a" stroke-width="0.9"/><circle cx="6.5" cy="6.5" r="3" fill="#b8d8b8" stroke="#2a6a2a" stroke-width="0.9"/><path d="M9,9 l1,1" stroke="#111" stroke-width="1.2"/></g>
<g transform="translate(2.5,240.42000000000002)"><rect x="0.5" y="1.5" width="6" height="5" fill="#e8eef4" stroke="#1c3a6a" stroke-width="0.9"/><circle cx="6.5" cy="6.5" r="2.6" fill="#c8e0c0" stroke="#2a6a2a" stroke-width="0.9"/></g>
<g transform="translate(2.5,254.48000000000002)"><circle cx="5" cy="5" r="0.9" fill="#222"/></g>
<g transform="translate(2.5,268.54)"><rect x="1" y="1" width="8.5" height="8.5" fill="#c8d4e4" stroke="#2a4a7a" stroke-width="0.9"/><path d="M1,1 L9.5,9.5 M9.5,1 L1,9.5" stroke="#6a86b0" stroke-width="0.8"/><path d="M0,1 h10 M0,9.5 h10" stroke="#2a4a7a" stroke-width="1.2"/></g>
<g transform="translate(2.5,282.6)"><rect x="1" y="1" width="8.5" height="8.5" fill="#2a3a4a" stroke="#111" stroke-width="0.9"/><path d="M0,1 h10 M0,9.5 h10" stroke="#111" stroke-width="1.4"/></g>
<g transform="translate(2.5,296.66)"><path d="M1,2 h6 l3,3 v4.5 h-9 z" fill="#d4e0ee" stroke="#2a4a7a" stroke-width="0.9"/><ellipse cx="5" cy="6" rx="2.5" ry="1.8" fill="none" stroke="#2a4a7a" stroke-width="0.9"/></g>
<g transform="translate(2.5,310.72)"><rect x="0.5" y="1" width="9.5" height="8.5" fill="#8aa4cc" stroke="#2a4a7a" stroke-width="0.9"/><path d="M0.5,4 h9.5 M0.5,6.8 h9.5 M3.5,1 v8.5 M6.7,1 v8.5" stroke="#e8eef8" stroke-width="0.7"/></g>
<g transform="translate(2.5,324.78000000000003)"><text x="0.5" y="10" font-family='"Liberation Sans",sans-serif' font-size="11.5" fill="#111">A</text></g>
<g transform="translate(1010,71.0)"><path d="M1,9 L9,1.5" stroke="#b8b040" stroke-width="2.8"/><path d="M1,9 L9,1.5" stroke="#333" stroke-width="0.8"/><path d="M0,10 h10" stroke="#555"/></g>
<g transform="translate(1010,85.07)"><circle cx="3.5" cy="3" r="2.4" fill="none" stroke="#1c3a6a" stroke-width="1"/><circle cx="6.5" cy="7.5" r="2.4" fill="none" stroke="#1c3a6a" stroke-width="1"/><path d="M6,2 l3,1 l-2,2" fill="none" stroke="#222"/></g>
<g transform="translate(1010,99.14)"><path d="M5,0.5 V10 M4,1 L0.5,9 h3.5 z M6,1 L9.5,9 h-3.5 z" fill="#c8d0d8" stroke="#333" stroke-width="0.9"/></g>
<g transform="translate(1010,113.21000000000001)"><path d="M1,8 h8 v-3 h-3 Q5,1 3,2 Q1,3 1,8 z" fill="#c8d4e0" stroke="#1c3a6a" stroke-width="1"/></g>
<g transform="translate(1010,127.28)"><rect x="0.5" y="0.5" width="4" height="4" fill="none" stroke="#222"/><rect x="5.5" y="0.5" width="4" height="4" fill="none" stroke="#222"/><rect x="0.5" y="5.5" width="4" height="4" fill="none" stroke="#222"/><rect x="5.5" y="5.5" width="4" height="4" fill="none" stroke="#222"/></g>
<g transform="translate(1010,141.35)"><path d="M5,0 V10 M0,5 H10" stroke="#1c3a6a" stroke-width="1.4"/><path d="M5,0 l-2,2 h4 z M5,10 l-2,-2 h4 z M0,5 l2,-2 v4 z M10,5 l-2,-2 v4 z" fill="#1c3a6a"/></g>
<g transform="translate(1010,155.42000000000002)"><path d="M8,3 A4,4 0 1 1 3,2" fill="none" stroke="#1c3a6a" stroke-width="1.4"/><path d="M2,0 l2,2 l-2,2" fill="none" stroke="#1c3a6a" stroke-width="1"/></g>
<g transform="translate(1010,169.49)"><rect x="0.5" y="0.5" width="9" height="9" fill="#eef2f6" stroke="#7a8a9a" stroke-width="0.9"/><rect x="3.5" y="3.5" width="6" height="6" fill="none" stroke="#7a8a9a" stroke-width="0.8"/></g>
<g transform="translate(1010,183.56)"><path d="M1,1 h3 l6,9 h-9 z" fill="#dfe6ee" stroke="#333" stroke-width="0.9"/></g>
<g transform="translate(1010,197.63)"><path d="M0.5,6 L9.5,4" stroke="#5a7aa8" stroke-width="1"/><path d="M5,1 V9" stroke="#5a7aa8" stroke-width="1"/></g>
<g transform="translate(1010,211.7)"><path d="M0.5,9 L9.5,1" stroke="#5a7aa8" stroke-width="1"/><path d="M3,5 h6" stroke="#333"/></g>
<g transform="translate(1010,225.77)"><path d="M1,1 v8.5 h8.5 v-8.5 z" fill="none" stroke="#333" stroke-width="1"/></g>
<g transform="translate(1010,239.84)"><path d="M1,1 v8.5 h8.5 v-8.5" fill="none" stroke="#333" stroke-width="1"/></g>
<g transform="translate(1010,253.90999999999997)"><path d="M0,5 h10" stroke="#1c3a6a" stroke-width="1.2"/><path d="M0,3 l4,2 l-4,2 z M10,3 l-4,2 l4,2 z" fill="#1c3a6a"/></g>
<g transform="translate(1010,267.98)"><path d="M1,10 V4 L5,1 H10" fill="none" stroke="#1c3a6a" stroke-width="1.1"/></g>
<g transform="translate(1010,282.05)"><path d="M1,10 V6 Q1,1 8,1 H10" fill="none" stroke="#1c3a6a" stroke-width="1.1"/></g>
<g transform="translate(1010,296.12)"><path d="M1,9 L8,2" stroke="#c04a30" stroke-width="2.2"/><path d="M3,2 L9,8" stroke="#333" stroke-width="1.1"/><circle cx="3" cy="7" r="1.8" fill="#d86a40"/></g>
<g transform="translate(1010,321.8)"><rect x="0.5" y="0.5" width="6" height="6" fill="#6a8cc0" stroke="#1c3a6a"/><rect x="3.5" y="3.5" width="6" height="6" fill="#2a4a7a" stroke="#1c3a6a"/></g>
<g transform="translate(1010,336.6)"><rect x="3.5" y="3.5" width="6" height="6" fill="#c8d4e4" stroke="#1c3a6a"/><rect x="0.5" y="0.5" width="6" height="6" fill="#2a4a7a" stroke="#1c3a6a"/></g>
<g transform="translate(1010,349.6)"><rect x="0.5" y="0.5" width="6.5" height="6.5" fill="#2a4a7a" stroke="#1c3a6a"/><rect x="3" y="3" width="6.5" height="6.5" fill="#6a8cc0" stroke="#1c3a6a"/></g>
<g transform="translate(1010,363.6)"><rect x="3" y="3" width="6.5" height="6.5" fill="#dfe6ee" stroke="#1c3a6a"/><rect x="0.5" y="0.5" width="6.5" height="6.5" fill="#2a4a7a" stroke="#1c3a6a"/></g>
<g transform="translate(27.2,84)"><rect x="0.5" y="0.5" width="8" height="6" fill="#fff" stroke="#222" stroke-width="0.9"/><path d="M3,10 L6,3 L9,10 z" fill="#fff" stroke="#222" stroke-width="0.9"/></g>
<g transform="translate(41.9,84)"><rect x="0.5" y="0.5" width="5" height="5" fill="#fff" stroke="#222" stroke-width="0.8"/><rect x="2" y="2" width="3" height="3" fill="none" stroke="#222" stroke-width="0.6"/><path d="M5,9 L7,4 L9,9 z" fill="#fff" stroke="#222" stroke-width="0.8"/><ellipse cx="7" cy="9.5" rx="2.5" ry="1" fill="none" stroke="#222" stroke-width="0.7"/></g>
<g transform="translate(57,84)"><path d="M0.5,3.5 h6.5 v6.5 h-6.5 z" fill="#fff" stroke="#333" stroke-width="0.8"/><path d="M0.5,3.5 l3,-3 h6.5 l-3,3 z" fill="#fff" stroke="#333" stroke-width="0.8"/><path d="M7,3.5 l3,-3 v6.5 l-3,3 z" fill="#fff" stroke="#333" stroke-width="0.8"/></g>
<g transform="translate(71.5,84)"><path d="M0.5,3.5 L5,1 L10,3.5 V7.5 L5,10 L0.5,7.5 Z" fill="#3c78c0"/><path d="M0.5,3.5 L5,1 L10,3.5 L5,5.5 z" fill="#9cc6ec"/></g>
<g transform="translate(86,84)"><circle cx="5" cy="5" r="4.5" fill="#3a70b0"/><circle cx="3.8" cy="3.5" r="2" fill="#a8d0f0"/><path d="M5,10 h5" stroke="#8aa" stroke-width="0.8"/></g>
<g transform="translate(101,84)"><path d="M0.5,3 L5,1 L10,3 V8 L5,10 L0.5,8 Z" fill="#4a80c0" stroke="#1a3a6a" stroke-width="0.9"/><path d="M0.5,3 L5,5 L10,3 M5,5 V10" fill="none" stroke="#1a3a6a" stroke-width="0.8"/><path d="M1,3 L5,1.3 L9.5,3 L5,4.6 Z" fill="#a0c8ec"/></g>
<g transform="translate(116,84)"><circle cx="5" cy="5" r="4.5" fill="#4a80c0" stroke="#1a3a6a" stroke-width="0.7"/><path d="M2,2.5 L8,7.5 M8,2.5 L2,7.5" stroke="#a8ccec" stroke-width="0.9"/></g>
</svg></body></html>
